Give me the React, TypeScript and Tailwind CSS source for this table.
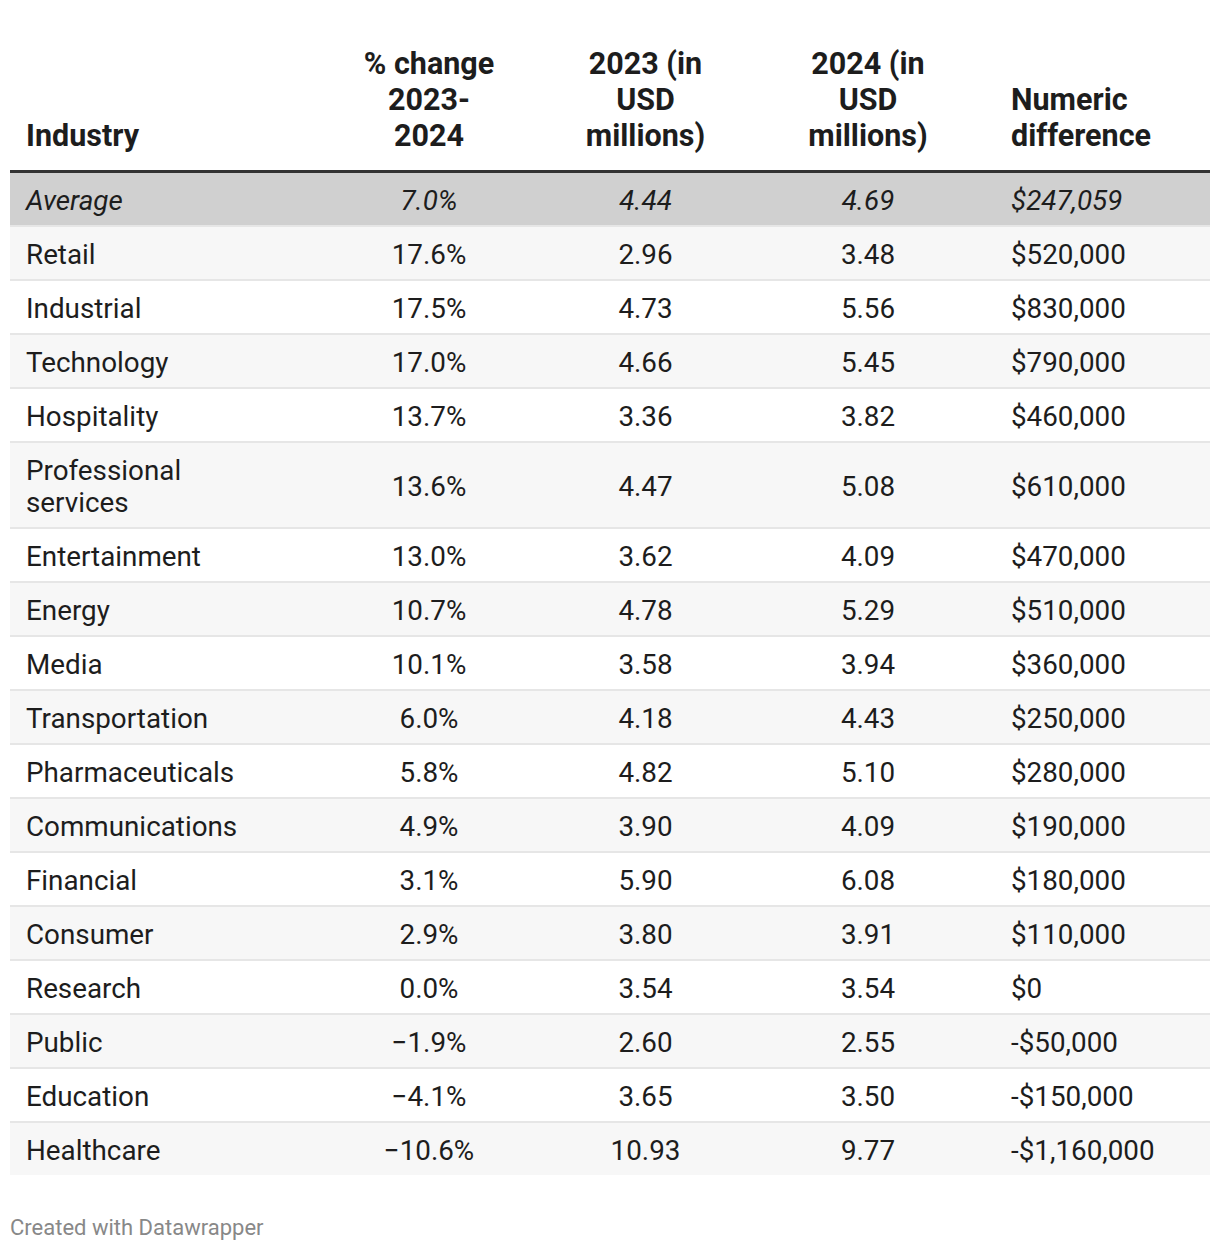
const rows: [string, string, string, string, string][] = [
  ["Retail", "17.6%", "2.96", "3.48", "$520,000"],
  ["Industrial", "17.5%", "4.73", "5.56", "$830,000"],
  ["Technology", "17.0%", "4.66", "5.45", "$790,000"],
  ["Hospitality", "13.7%", "3.36", "3.82", "$460,000"],
  ["Professional services", "13.6%", "4.47", "5.08", "$610,000"],
  ["Entertainment", "13.0%", "3.62", "4.09", "$470,000"],
  ["Energy", "10.7%", "4.78", "5.29", "$510,000"],
  ["Media", "10.1%", "3.58", "3.94", "$360,000"],
  ["Transportation", "6.0%", "4.18", "4.43", "$250,000"],
  ["Pharmaceuticals", "5.8%", "4.82", "5.10", "$280,000"],
  ["Communications", "4.9%", "3.90", "4.09", "$190,000"],
  ["Financial", "3.1%", "5.90", "6.08", "$180,000"],
  ["Consumer", "2.9%", "3.80", "3.91", "$110,000"],
  ["Research", "0.0%", "3.54", "3.54", "$0"],
  ["Public", "\u22121.9%", "2.60", "2.55", "-$50,000"],
  ["Education", "\u22124.1%", "3.65", "3.50", "-$150,000"],
  ["Healthcare", "\u221210.6%", "10.93", "9.77", "-$1,160,000"],
];

const font = { fontFamily: "Roboto, 'Noto Sans', sans-serif" };

export default function App() {
  return (
    <div className="bg-white p-[10px] text-[#1d1d1d]" style={font}>
      <table className="w-[1200px] table-fixed border-collapse">
        <colgroup>
          <col className="w-[310px]" />
          <col className="w-[218px]" />
          <col className="w-[215px]" />
          <col className="w-[230px]" />
          <col className="w-[227px]" />
        </colgroup>
        <thead>
          <tr className="border-b-[3px] border-[#333333] align-bottom text-[30.5px] font-bold leading-[36px]">
            <th className="pb-[16px] pl-[16px] pt-[36px] text-left">Industry</th>
            <th className="pb-[16px] pt-[36px] text-center">
              % change
              <br />
              2023-
              <br />
              2024
            </th>
            <th className="pb-[16px] pt-[36px] text-center">
              2023 (in
              <br />
              USD
              <br />
              millions)
            </th>
            <th className="pb-[16px] pt-[36px] text-center">
              2024 (in
              <br />
              USD
              <br />
              millions)
            </th>
            <th className="pb-[16px] pl-[28px] pt-[36px] text-left">
              Numeric
              <br />
              difference
            </th>
          </tr>
        </thead>
        <tbody className="text-[27.8px] leading-[32px]">
          <tr className="border-b-2 border-[#e6e6e6] bg-[#d0d0d0] italic">
            <td className="pb-[8px] pl-[16px] pt-[12px]">Average</td>
            <td className="pb-[8px] pt-[12px] text-center">7.0%</td>
            <td className="pb-[8px] pt-[12px] text-center">4.44</td>
            <td className="pb-[8px] pt-[12px] text-center">4.69</td>
            <td className="pb-[8px] pl-[28px] pt-[12px]">$247,059</td>
          </tr>
          {rows.map((r, i) => (
            <tr
              key={r[0]}
              className={
                (i % 2 === 0 ? "bg-[#f7f7f7]" : "bg-white") +
                (i === rows.length - 1 ? "" : " border-b-2 border-[#e6e6e6]")
              }
            >
              <td className="pb-[8px] pl-[16px] pr-[40px] pt-[12px]">
                {r[0] === "Professional services" ? (
                  <>
                    Professional
                    <br />
                    services
                  </>
                ) : (
                  r[0]
                )}
              </td>
              <td className="pb-[8px] pt-[12px] text-center">{r[1]}</td>
              <td className="pb-[8px] pt-[12px] text-center">{r[2]}</td>
              <td className="pb-[8px] pt-[12px] text-center">{r[3]}</td>
              <td className="pb-[8px] pl-[28px] pt-[12px]">{r[4]}</td>
            </tr>
          ))}
        </tbody>
      </table>
      <div className="mt-[40px] text-[22px] leading-[26px] text-[#888888]">Created with Datawrapper</div>
    </div>
  );
}
